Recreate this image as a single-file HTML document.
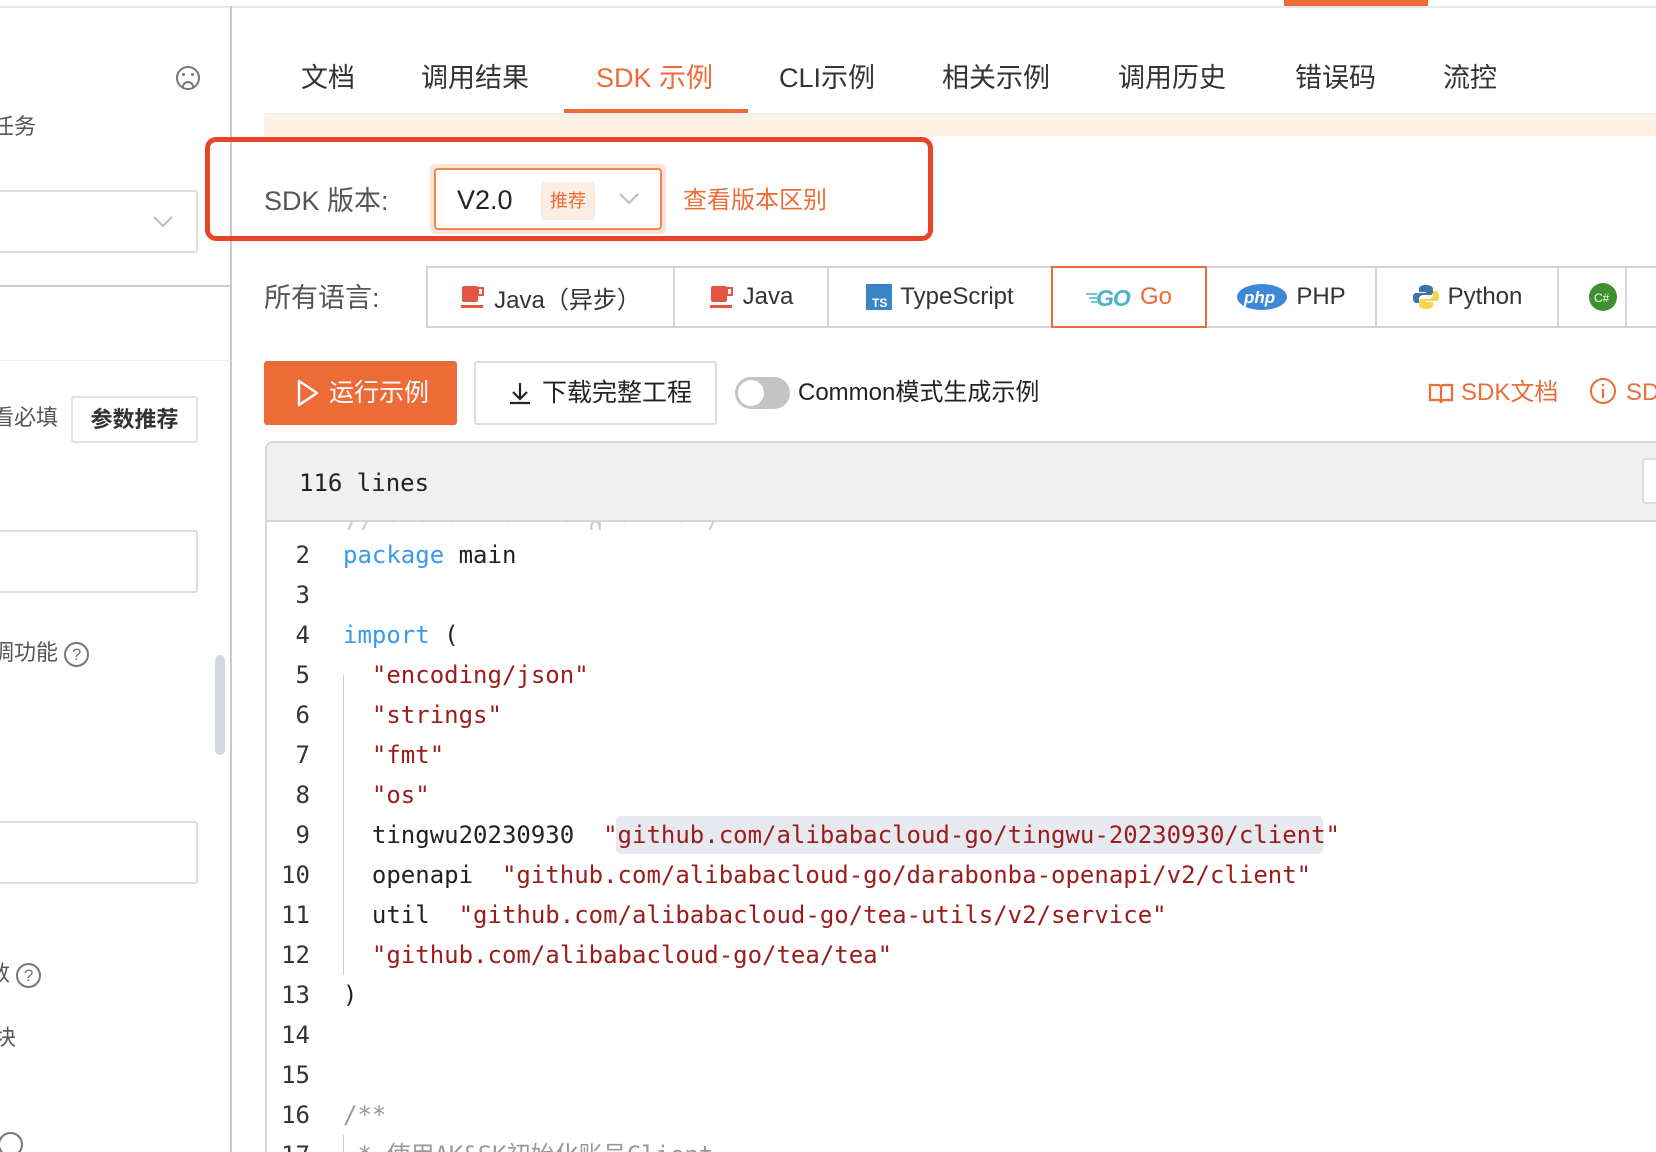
<!DOCTYPE html>
<html><head><meta charset="utf-8"><style>
*{margin:0;padding:0;box-sizing:border-box}
html,body{width:1656px;height:1152px;overflow:hidden}
body{background:#fff;position:relative;font-family:"Liberation Sans","Noto Sans CJK SC",sans-serif;color:#333}
.a{position:absolute;white-space:nowrap}
.tab{position:absolute;top:59px;font-size:27px;color:#333;line-height:38px}
.mono{font-family:"DejaVu Sans Mono","Liberation Mono",monospace;font-size:24px}
.ln{position:absolute;left:270px;width:40px;text-align:right;font-family:"DejaVu Sans Mono",monospace;font-size:24px;color:#333;line-height:40px}
.cd{position:absolute;left:343px;font-family:"DejaVu Sans Mono",monospace;font-size:24px;color:#222;line-height:40px;white-space:pre}
.k{color:#3a9af0}.s{color:#9a1c1c}
.lt{position:absolute;top:266px;height:62px;border:2px solid #d4d4d4;border-left:none;display:flex;align-items:center;justify-content:center;font-size:24px;color:#333;gap:8px}
.side{color:#555;font-size:22px}
.q{display:inline-block;width:25px;height:25px;border:2px solid #777;border-radius:50%;font-size:17px;line-height:21px;text-align:center;color:#777;vertical-align:middle}
</style></head><body>
<div class="a" style="left:0;top:6px;width:1656px;height:2px;background:#e8e8e8"></div>
<div class="a" style="left:1284px;top:0;width:144px;height:6px;background:#ec6b37"></div>
<!-- sidebar -->
<div class="a" style="left:230px;top:6px;width:2px;height:1146px;background:#c8c9cc"></div>
<div class="a" style="left:176px;top:66px;width:24px;height:24px;border:2px solid #777;border-radius:50%"></div>
<div class="a" style="left:182px;top:73px;width:3px;height:3px;background:#777;border-radius:50%"></div>
<div class="a" style="left:191px;top:73px;width:3px;height:3px;background:#777;border-radius:50%"></div>
<div class="a" style="left:182px;top:81px;width:12px;height:6px;border:2px solid #777;border-bottom:none;border-radius:6px 6px 0 0"></div>
<div class="a side" style="left:-8px;top:110px;line-height:34px">任务</div>
<div class="a" style="left:-10px;top:190px;width:208px;height:63px;border:2px solid #ddd;border-radius:3px"></div>
<svg class="a" style="left:152px;top:215px" width="22" height="14"><path d="M2 2 L11 11 L20 2" fill="none" stroke="#bbb" stroke-width="2"/></svg>
<div class="a" style="left:0;top:285px;width:231px;height:2px;background:#ccc"></div>
<div class="a" style="left:0;top:360px;width:231px;height:1px;background:#eee"></div>
<div class="a side" style="left:-8px;top:401px;line-height:34px">看必填</div>
<div class="a" style="left:71px;top:396px;width:127px;height:47px;border:2px solid #e2e2e2;border-radius:3px;font-size:22px;font-weight:bold;color:#333;text-align:center;line-height:43px">参数推荐</div>
<div class="a" style="left:-10px;top:530px;width:208px;height:63px;border:2px solid #ddd;border-radius:3px"></div>
<div class="a side" style="left:-8px;top:636px;line-height:34px">调功能 <span class="q">?</span></div>
<div class="a" style="left:215px;top:655px;width:10px;height:100px;background:#d4d7dd;border-radius:5px"></div>
<div class="a" style="left:-10px;top:821px;width:208px;height:63px;border:2px solid #ddd;border-radius:3px"></div>
<div class="a side" style="left:-12px;top:957px;line-height:34px">数 <span class="q">?</span></div>
<div class="a side" style="left:-6px;top:1021px;line-height:34px">块</div>
<div class="a" style="left:-2px;top:1132px;width:25px;height:25px;border:2px solid #777;border-radius:50%"></div>
<!-- tabs -->
<div class="tab" style="left:301px">文档</div>
<div class="tab" style="left:421px">调用结果</div>
<div class="tab" style="left:596px;color:#ec6b37">SDK 示例</div>
<div class="tab" style="left:779px">CLI示例</div>
<div class="tab" style="left:942px">相关示例</div>
<div class="tab" style="left:1118px">调用历史</div>
<div class="tab" style="left:1295px">错误码</div>
<div class="tab" style="left:1443px">流控</div>
<div class="a" style="left:564px;top:109px;width:184px;height:4px;background:#ec6b37"></div>
<div class="a" style="left:264px;top:113px;width:1392px;height:2px;background:#f0f0f0"></div>
<div class="a" style="left:264px;top:115px;width:1392px;height:21px;background:#fdf2e3"></div>
<!-- red box -->
<div class="a" style="left:205px;top:137px;width:728px;height:104px;border:5px solid #e8442a;border-radius:11px"></div>
<div class="a" style="left:264px;top:183px;font-size:27px;color:#555;line-height:36px">SDK 版本:</div>
<div class="a" style="left:430px;top:164px;width:236px;height:70px;border-radius:6px;background:#fde3d7"></div>
<div class="a" style="left:434px;top:168px;width:228px;height:62px;border:2px solid #f0874d;border-radius:4px;background:#fff"></div>
<div class="a" style="left:457px;top:182px;font-size:27px;color:#222;line-height:36px">V2.0</div>
<div class="a" style="left:541px;top:182px;width:54px;height:38px;background:#fdece4;border-radius:3px;color:#ec6b37;font-size:18px;text-align:center;line-height:38px">推荐</div>
<svg class="a" style="left:618px;top:192px" width="22" height="14"><path d="M2 2 L11 11 L20 2" fill="none" stroke="#bbb" stroke-width="2"/></svg>
<div class="a" style="left:683px;top:184px;font-size:24px;color:#ec6d35;line-height:34px">查看版本区别</div>
<!-- languages -->
<div class="a" style="left:264px;top:279px;font-size:27px;color:#555;line-height:38px">所有语言:</div>
<div class="lt" style="left:426px;width:249px;border-left:2px solid #d4d4d4"><svg width="26" height="24"><rect x="2" y="1" width="16" height="16" fill="#e15542" rx="2"/><rect x="18" y="3" width="5" height="7" fill="none" stroke="#e15542" stroke-width="2"/><rect x="1" y="20" width="22" height="3" fill="#e15542"/></svg>Java（异步）</div>
<div class="lt" style="left:675px;width:154px"><svg width="26" height="24"><rect x="2" y="1" width="16" height="16" fill="#e15542" rx="2"/><rect x="18" y="3" width="5" height="7" fill="none" stroke="#e15542" stroke-width="2"/><rect x="1" y="20" width="22" height="3" fill="#e15542"/></svg>Java</div>
<div class="lt" style="left:829px;width:224px"><svg width="26" height="26"><rect width="26" height="26" fill="#3b84c8"/><text x="6" y="23" font-size="12" font-weight="bold" fill="#fff" font-family="Liberation Sans">TS</text></svg>TypeScript</div>
<div class="lt" style="left:1051px;width:156px;border:2px solid #ec6b37;color:#ec6b37;z-index:2;gap:2px"><svg width="52" height="26"><path d="M0 10h11M3 14h8M5 18h6" stroke="#49b3c8" stroke-width="1.5"/><text x="10" y="22" font-size="23" font-weight="900" font-style="italic" fill="#49b3c8" font-family="Liberation Sans" letter-spacing="-1">GO</text></svg>Go</div>
<div class="lt" style="left:1207px;width:170px"><svg width="52" height="28"><ellipse cx="26" cy="14" rx="25" ry="13" fill="#3f88d8"/><text x="8" y="20" font-size="17" font-weight="bold" font-style="italic" fill="#fff" font-family="Liberation Sans">php</text></svg>PHP</div>
<div class="lt" style="left:1377px;width:182px"><svg width="28" height="28"><path d="M14 2c-6 0-7 2-7 4v3h7v1H4c-3 0-3 3-3 5s1 5 3 5h3v-4c0-2 2-4 4-4h7c2 0 3-1 3-3V6c0-2-2-4-7-4z" fill="#3d74a8"/><path d="M14 26c6 0 7-2 7-4v-3h-7v-1h10c3 0 3-3 3-5s-1-5-3-5h-3v4c0 2-2 4-4 4h-7c-2 0-3 1-3 3v3c0 2 2 4 7 4z" fill="#f7d54a"/></svg>Python</div>
<div class="lt" style="left:1559px;width:68px;justify-content:flex-start;padding-left:30px"><svg width="28" height="28"><circle cx="14" cy="14" r="14" fill="#3f9030"/><text x="5" y="19" font-size="12" fill="#fff" font-family="Liberation Sans">C#</text></svg></div>
<div class="lt" style="left:1627px;width:29px;border-right:none"></div>
<!-- buttons -->
<div class="a" style="left:264px;top:361px;width:193px;height:64px;background:#ec6b37;border-radius:3px;color:#fff;font-size:25px;line-height:64px;padding-left:65px">运行示例</div>
<svg class="a" style="left:296px;top:379px" width="24" height="28"><path d="M3 2 L21 14 L3 26 Z" fill="none" stroke="#fff" stroke-width="2.5" stroke-linejoin="round"/></svg>
<div class="a" style="left:474px;top:361px;width:243px;height:64px;border:2px solid #ddd;border-radius:3px;font-size:25px;line-height:60px;padding-left:66px;color:#222">下载完整工程</div>
<svg class="a" style="left:508px;top:381px" width="24" height="24"><path d="M12 2v15M5 11l7 7 7-7M2 22h20" fill="none" stroke="#222" stroke-width="2.2"/></svg>
<div class="a" style="left:735px;top:377px;width:55px;height:32px;background:#c4c4c4;border-radius:16px"></div>
<div class="a" style="left:738px;top:380px;width:26px;height:26px;background:#fff;border-radius:50%"></div>
<div class="a" style="left:798px;top:376px;font-size:24px;color:#222;line-height:34px">Common模式生成示例</div>
<svg class="a" style="left:1428px;top:382px" width="26" height="24"><path d="M2 3h8c2 0 3 1 3 3v15c0-2-1-3-3-3H2zM24 3h-8c-2 0-3 1-3 3v15c0-2 1-3 3-3h8z" fill="none" stroke="#ec6d35" stroke-width="2.2"/></svg>
<div class="a" style="left:1461px;top:376px;font-size:24px;color:#ec6d35;line-height:34px">SDK文档</div>
<svg class="a" style="left:1589px;top:377px" width="28" height="28"><circle cx="14" cy="14" r="12" fill="none" stroke="#ec6d35" stroke-width="2"/><path d="M14 12v9M14 7v2" stroke="#ec6d35" stroke-width="2.2"/></svg>
<div class="a" style="left:1626px;top:376px;font-size:24px;color:#ec6d35;line-height:34px">SDK</div>
<!-- code -->
<div class="a" style="left:265px;top:441px;width:1391px;height:711px;border:2px solid #d8d8d8;border-right:none;border-bottom:none;border-radius:8px 0 0 0"></div>
<div class="a" style="left:267px;top:443px;width:1389px;height:78px;background:#f0f0f0;border-radius:6px 0 0 0"></div>
<div class="a" style="left:267px;top:520px;width:1389px;height:2px;background:#d6d6d6"></div>
<div class="a" style="left:1642px;top:458px;width:14px;height:46px;border:2px solid #ddd;border-right:none;background:#fff;border-radius:4px 0 0 4px"></div>
<div class="a mono" style="left:299px;top:468px;color:#222;line-height:30px">116 lines</div>
<div class="a" style="left:343px;top:522px;font-family:'DejaVu Sans Mono',monospace;font-size:24px;color:#ccc;line-height:8px;height:8px;overflow:hidden">//  ‘   ‘   ‘    ‘   ‘  ,  ‘  g  ‘  ‘  ‘ /</div>
<div class="a" style="left:343px;top:675px;width:1px;height:300px;background:#ccc"></div>
<div class="a" style="left:616px;top:816px;width:707px;height:38px;background:#e6eaf0;border-radius:5px"></div>
<div class="ln" style="top:535px">2</div><div class="cd" style="top:535px"><span class="k">package</span> main</div>
<div class="ln" style="top:575px">3</div>
<div class="ln" style="top:615px">4</div><div class="cd" style="top:615px"><span class="k">import</span> (</div>
<div class="ln" style="top:655px">5</div><div class="cd" style="top:655px">  <span class="s">"encoding/json"</span></div>
<div class="ln" style="top:695px">6</div><div class="cd" style="top:695px">  <span class="s">"strings"</span></div>
<div class="ln" style="top:735px">7</div><div class="cd" style="top:735px">  <span class="s">"fmt"</span></div>
<div class="ln" style="top:775px">8</div><div class="cd" style="top:775px">  <span class="s">"os"</span></div>
<div class="ln" style="top:815px">9</div><div class="cd" style="top:815px">  tingwu20230930  <span class="s">"github.com/alibabacloud-go/tingwu-20230930/client"</span></div>
<div class="ln" style="top:855px">10</div><div class="cd" style="top:855px">  openapi  <span class="s">"github.com/alibabacloud-go/darabonba-openapi/v2/client"</span></div>
<div class="ln" style="top:895px">11</div><div class="cd" style="top:895px">  util  <span class="s">"github.com/alibabacloud-go/tea-utils/v2/service"</span></div>
<div class="ln" style="top:935px">12</div><div class="cd" style="top:935px">  <span class="s">"github.com/alibabacloud-go/tea/tea"</span></div>
<div class="ln" style="top:975px">13</div><div class="cd" style="top:975px">)</div>
<div class="ln" style="top:1015px">14</div>
<div class="ln" style="top:1055px">15</div>
<div class="ln" style="top:1095px">16</div><div class="cd" style="top:1095px;color:#999">/**</div>
<div class="ln" style="top:1135px">17</div><div class="cd" style="top:1135px;color:#999"> * 使用AK&amp;SK初始化账号Client</div>
<div class="a" style="left:343px;top:1135px;width:1px;height:17px;background:#ccc"></div>
</body></html>
